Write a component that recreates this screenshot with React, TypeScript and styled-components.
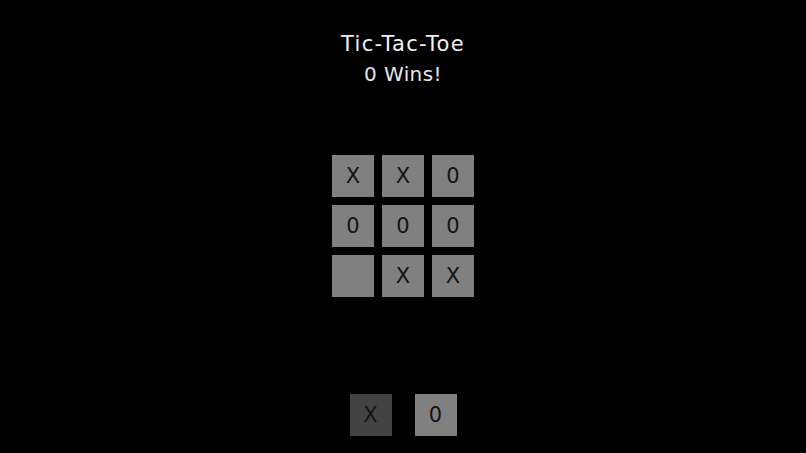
import React from 'react';
import styled, { createGlobalStyle } from 'styled-components';

const GlobalStyle = createGlobalStyle`
  html, body {
    margin: 0;
    padding: 0;
    background: #000000;
  }
  body {
    font-family: 'DejaVu Sans', 'Liberation Sans', sans-serif;
  }
`;

type Mark = 'X' | '0' | '';

const board: Mark[] = ['X', 'X', '0', '0', '0', '0', '', 'X', 'X'];

const Page = styled.div`
  width: 100%;
  height: 100vh;
  display: flex;
  flex-direction: column;
  align-items: center;
  box-sizing: border-box;
  padding: 30px 0 17px;
`;

const Header = styled.header`
  display: flex;
  flex-direction: column;
  align-items: center;
  color: #f2f2f2;
`;

const Title = styled.h1`
  margin: 0;
  font-size: 21px;
  font-weight: 400;
  line-height: 28px;
  letter-spacing: 1.3px;
`;

const Status = styled.p`
  margin: 3px 0 0;
  font-size: 20px;
  font-weight: 400;
  line-height: 26px;
  letter-spacing: 0.4px;
  color: #e6e6e6;
`;

const Board = styled.div`
  margin-top: 68px;
  display: grid;
  grid-template-columns: repeat(3, 42px);
  grid-auto-rows: 42px;
  gap: 8px;
`;

const Cell = styled.button`
  width: 42px;
  height: 42px;
  padding: 0;
  border: none;
  background: #808080;
  color: #141414;
  font-family: inherit;
  font-size: 21px;
  display: flex;
  align-items: center;
  justify-content: center;
`;

const Controls = styled.div`
  margin-top: auto;
  display: flex;
  gap: 23px;
`;

const PlayerButton = styled.button<{ $active?: boolean }>`
  width: 42px;
  height: 42px;
  padding: 0;
  border: none;
  background: ${(p) => (p.$active ? '#434343' : '#808080')};
  color: #141414;
  font-family: inherit;
  font-size: 21px;
  display: flex;
  align-items: center;
  justify-content: center;
`;

export default function App() {
  return (
    <>
      <GlobalStyle />
      <Page>
        <Header>
          <Title>Tic-Tac-Toe</Title>
          <Status>0 Wins!</Status>
        </Header>
        <Board>
          {board.map((mark, i) => (
            <Cell key={i}>{mark}</Cell>
          ))}
        </Board>
        <Controls>
          <PlayerButton $active>X</PlayerButton>
          <PlayerButton>0</PlayerButton>
        </Controls>
      </Page>
    </>
  );
}
